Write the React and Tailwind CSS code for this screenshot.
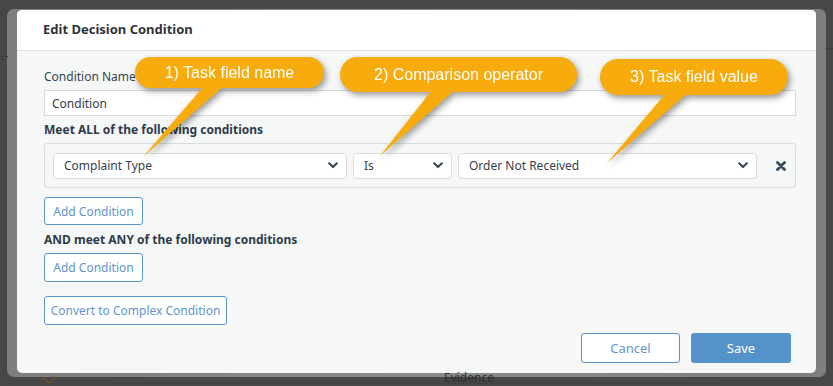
import React from 'react';

const ORANGE = '#f7ab0c';

function Chevron() {
  return (
    <svg width="10" height="7" viewBox="0 0 10 7" className="shrink-0">
      <path d="M1.2 1.3 L5 5 L8.8 1.3" fill="none" stroke="#3b4c5e" strokeWidth="2.2" strokeLinecap="round" strokeLinejoin="round" />
    </svg>
  );
}

function Select({ value, width }) {
  return (
    <div className={`${width} h-[26px] flex items-center justify-between pl-[10px] pr-[8px] bg-white border border-[#d9dcdf] rounded-[4px]`}>
      <span className="text-[#34404c] pt-px">{value}</span>
      <Chevron />
    </div>
  );
}

function OutlineButton({ children, className = '' }) {
  return (
    <button className={`flex items-center justify-center whitespace-nowrap pt-px bg-white border border-[#5b94c9] rounded-[3px] text-[#5f96cb] ${className}`}>
      {children}
    </button>
  );
}

function Callout({ text, box, tail }) {
  return (
    <>
      <svg className="absolute left-0 top-0" width="833" height="386">
        <polygon points={tail} fill={ORANGE} />
      </svg>
      <div
        className="absolute flex items-center justify-center rounded-full bg-[#f7ab0c] text-white text-[16px] leading-none"
        style={box}
      >
        <span className="font-['Liberation_Sans',Arial,sans-serif]">{text}</span>
      </div>
    </>
  );
}

export default function App() {
  return (
    <div className="relative w-[833px] h-[386px] overflow-hidden bg-[#474747] font-['Noto_Sans',sans-serif] text-[12px]">
      {/* dimmed page behind the modal */}
      <div className="absolute left-0 top-[56px] w-[8px] h-px bg-[#3c3c3c]" />
      <div className="absolute left-[826px] top-[48px] w-[10px] h-px bg-[#3c3c3c]" />
      <div className="absolute left-[826px] top-[80px] w-[10px] h-px bg-[#3a4f66]" />
      <div className="absolute left-[444px] top-[370px] text-[12px] leading-[16px] text-[#2e2e2e]">Evidence</div>
      <div className="absolute left-[118px] top-[383px] w-[600px] border-t border-dotted border-[#3a3a3a]" />
      <svg className="absolute left-[40px] top-[376px]" width="18" height="10">
        <path d="M2 1 L9 7 L16 1" fill="none" stroke="#6b5425" strokeWidth="1.5" />
      </svg>

      <div className="pt-[9px] pl-[7px]">
        <div className="w-[819px] pt-px px-[10px] pb-[4px] rounded-[7px] bg-gradient-to-r from-[#7e7e7e] via-[#8a8a8a] to-[#7e7e7e]">
          <div className="w-[799px] rounded-[5px] overflow-hidden bg-[#f6f8f8]">
            <div className="h-[41px] bg-white border-b border-[#dde2e7] flex items-center pl-[26px]">
              <h1 className="text-[13px] font-bold text-[#2f3337]">Edit Decision Condition</h1>
            </div>

            <div className="pt-[18px] pl-[27px] pr-[20px] pb-[10px] text-[#3a4450]">
              <div className="leading-[16px] text-[#38434f]">Condition Name</div>
              <div className="mt-[5px] h-[26px] flex items-center pl-[7px] pt-px bg-white border border-[#d6d9dc] text-[#333b44]">
                Condition
              </div>

              <div className="mt-[6px] leading-[16px] font-bold text-[#2f3b48]">Meet ALL of the following conditions</div>
              <div className="mt-[5px] h-[45px] flex items-center pl-[8px] border border-[#d9dcdf] rounded-[3px]">
                <div className="flex gap-[6px]">
                  <Select value="Complaint Type" width="w-[294px]" />
                  <Select value="Is" width="w-[99px]" />
                  <Select value="Order Not Received" width="w-[299px]" />
                </div>
                <svg className="ml-[19px]" width="10" height="10" viewBox="0 0 10 10">
                  <path d="M1.5 1.5 L8.5 8.5 M8.5 1.5 L1.5 8.5" stroke="#34495e" strokeWidth="2.8" strokeLinecap="round" />
                </svg>
              </div>

              <OutlineButton className="mt-[9px] w-[99px] h-[28px]">Add Condition</OutlineButton>

              <div className="mt-[7px] leading-[16px] font-bold text-[#2f3b48]">AND meet ANY of the following conditions</div>
              <OutlineButton className="mt-[5px] w-[99px] h-[29px]">Add Condition</OutlineButton>

              <OutlineButton className="mt-[14px] w-[183px] h-[29px]">Convert to Complex Condition</OutlineButton>

              <div className="mt-[8px] mr-[5px] flex justify-end gap-[11px]">
                <OutlineButton className="w-[99px] h-[30px] text-[13px]">Cancel</OutlineButton>
                <button className="w-[100px] h-[30px] pt-px rounded-[3px] bg-[#5393c9] text-white text-[13px]">Save</button>
              </div>
            </div>
          </div>
        </div>
      </div>

      {/* callouts */}
      <div className="absolute inset-0 pointer-events-none [filter:drop-shadow(2px_3px_3px_rgba(0,0,0,0.4))]">
        <Callout text="1) Task field name" box={{ left: 135, top: 57, width: 189, height: 31 }} tail="204,86 224,86 143,157" />
        <Callout text="2) Comparison operator" box={{ left: 340, top: 57, width: 237, height: 35 }} tail="432,90 455,90 380,156" />
        <Callout text="3) Task field value" box={{ left: 600, top: 59, width: 188, height: 36 }} tail="666,93 688,93 607,163" />
      </div>
    </div>
  );
}
